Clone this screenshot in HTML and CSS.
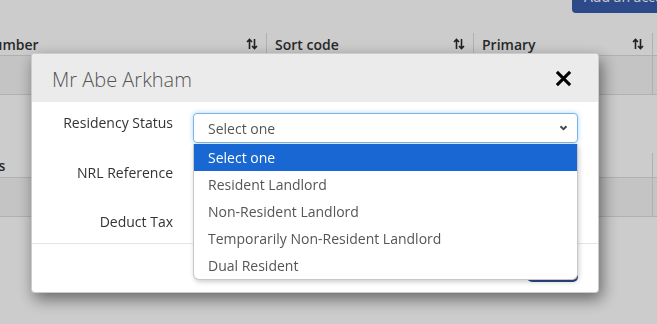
FILE: index.html
```html
<!DOCTYPE html>
<html>
<head>
<link rel="stylesheet" href="styles.css">
</head>
<body>
 <div class="page">
   <div class="toolbar">
     <button class="btn-add">Add an account</button>
   </div>

   <div class="grid-table accounts">
     <div class="th">Account number <svg class="sort" viewBox="0 0 12 12"><path d="M3.5 11V1.5M1 4l2.5-2.5L6 4M8.5 1v9.5M6 8l2.5 2.5L11 8"/></svg></div>
     <div class="th">Sort code <svg class="sort" viewBox="0 0 12 12"><path d="M3.5 11V1.5M1 4l2.5-2.5L6 4M8.5 1v9.5M6 8l2.5 2.5L11 8"/></svg></div>
     <div class="th">Primary <svg class="sort" viewBox="0 0 12 12"><path d="M3.5 11V1.5M1 4l2.5-2.5L6 4M8.5 1v9.5M6 8l2.5 2.5L11 8"/></svg></div>
     <div class="th">Actions</div>
     <div class="td"></div><div class="td"></div><div class="td"></div><div class="td"></div>
   </div>

   <div class="grid-table contacts">
     <div class="th">Addresses</div>
     <div class="th"></div>
     <div class="th"></div>
     <div class="th"></div>
     <div class="td"></div><div class="td"></div><div class="td"></div><div class="td"></div>
   </div>
 </div>

 <div class="backdrop"></div>

 <div class="modal">
   <div class="modal-header">
     <h4 class="modal-title">Mr Abe Arkham</h4>
     <svg class="close" viewBox="0 0 18 18"><path d="M2 2l14 14M16 2L2 16"/></svg>
   </div>
   <div class="modal-body">
     <div class="form-row">
       <label>Residency Status</label>
       <div class="field">
         <div class="select is-open">
           Select one
           <svg class="chevron" viewBox="0 0 10 7"><path d="M1.5 1.5l3.5 3.5 3.5-3.5"/></svg>
         </div>
         <ul class="options">
           <li class="active">Select one</li>
           <li>Resident Landlord</li>
           <li>Non-Resident Landlord</li>
           <li>Temporarily Non-Resident Landlord</li>
           <li>Dual Resident</li>
         </ul>
       </div>
     </div>
     <div class="form-row">
       <label>NRL Reference</label>
       <div class="field"><div class="input"></div></div>
     </div>
     <div class="form-row">
       <label>Deduct Tax</label>
       <div class="field"><div class="input"></div></div>
     </div>
   </div>
   <div class="modal-footer">
     <button class="btn-save">Save</button>
   </div>
 </div>
</body>
</html>
```

FILE: styles.css
```css
/* Base */
body {
 margin: 0;
 font-family: "Open Sans", "Liberation Sans", sans-serif;
 font-size: 14px;
 color: #333;
 background: #fff;
 overflow: hidden;
}

.page {
 width: 1000px;
}

.toolbar {
 display: flex;
 padding-left: 572px;
 height: 13px;
}

.btn-add {
 margin-top: -21px;
 height: 34px;
 padding: 0 12px;
 border: 0;
 border-radius: 4px;
 background: #375dad;
 color: #fff;
 font-family: inherit;
 font-size: 14px;
 white-space: nowrap;
 align-self: flex-start;
}

/* Background tables */
.grid-table {
 display: grid;
 grid-template-columns: 348px 207px 179px 200px;
 margin-left: -82px;
}

.accounts { margin-top: 20px; }
.contacts { margin-top: 58px; }

.th {
 height: 22px;
 padding: 0 8px;
 display: flex;
 align-items: center;
 justify-content: space-between;
 font-weight: 600;
 border-bottom: 1px solid #ddd;
 border-left: 1px solid #ddd;
 white-space: nowrap;
}

.contacts .th { height: 24px; }
.contacts .th:first-child { padding-left: 18px; }

.th:first-child { border-left: 0; }

.td {
 height: 38px;
 background: #f5f5f5;
 border-bottom: 1px solid #ddd;
 border-left: 1px solid #ddd;
}

.td:nth-child(5) { border-left: 0; }

.sort {
 width: 12px;
 height: 12px;
 fill: none;
 stroke: #2a2a2a;
 stroke-width: 1.6;
}

.backdrop {
 position: fixed;
 inset: 0;
 background: rgba(0,0,0,0.2);
}

/* Modal */
.modal {
 position: fixed;
 top: 53px;
 left: 31px;
 width: 566px;
 background: #fff;
 border: 1px solid rgba(0,0,0,0.2);
 border-radius: 4px;
 box-shadow: 3px 6px 16px rgba(0,0,0,0.5);
}

.modal-header {
 height: 48px;
 background: #ebebeb;
 border-radius: 4px 4px 0 0;
 padding: 0 26px 0 20px;
 display: flex;
 align-items: center;
 justify-content: space-between;
}

.modal-title {
 margin: 0;
 font-size: 20px;
 font-weight: 300;
 color: #555;
 padding-top: 2px;
}

.close {
 width: 17px;
 height: 17px;
 fill: none;
 stroke: #000;
 stroke-width: 3.2;
}

.modal-body {
 padding: 11px 20px 1px;
 display: flex;
 flex-direction: column;
 gap: 19.5px;
}

.form-row {
 display: grid;
 grid-template-columns: 121px 385px;
 column-gap: 20px;
}

.form-row label {
 text-align: right;
 line-height: 20px;
 color: #333;
}

.field {
 position: relative;
 height: 30px;
}

.select, .input {
 box-sizing: border-box;
 height: 30px;
 border: 1px solid #ccc;
 border-radius: 4px;
 background: #fff;
}

.select {
 display: flex;
 align-items: center;
 justify-content: space-between;
 padding: 0 9px 0 14px;
 color: #555;
}

.select.is-open {
 border-color: #7ab4e8;
 box-shadow: 0 0 5px rgba(102,175,233,0.55);
}

.chevron {
 width: 9px;
 height: 6px;
 fill: none;
 stroke: #444;
 stroke-width: 2.2;
}

.options {
 position: absolute;
 z-index: 5;
 top: 31px;
 left: 0;
 right: 0;
 margin: 0;
 padding: 0;
 list-style: none;
 background: #fff;
 border: 1px solid #c8c8c8;
 border-top: 0;
 border-radius: 0 0 6px 6px;
 box-shadow: 1px 2px 5px rgba(0,0,0,0.2);
 overflow: hidden;
}

.options li {
 height: 27px;
 line-height: 27px;
 padding-left: 14px;
 color: #555;
}

.options li.active {
 background: #1967d2;
 color: #fff;
}

.modal-footer {
 border-top: 1px solid #e5e5e5;
 padding: 4px 20px 10px;
 display: flex;
 justify-content: flex-end;
}

.btn-save {
 width: 51px;
 height: 34px;
 border: 0;
 border-radius: 5px;
 background: #2d4984;
 color: #fff;
 font-family: inherit;
 font-size: 14px;
}
```
